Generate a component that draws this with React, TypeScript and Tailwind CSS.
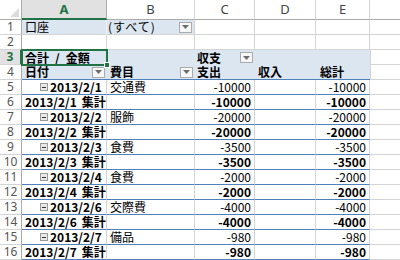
import React from "react";

const FONT = { fontFamily: "'Noto Sans CJK JP', 'Noto Sans', sans-serif" };

const W = ["w-[22px]", "w-[85px]", "w-[88px]", "w-[60px]", "w-[61px]", "w-[54px]"];

function Drop() {
  return (
    <div className="w-[13px] h-[11px] border border-[#ababab] bg-[#f7f7f7] flex items-center justify-center shrink-0">
      <svg width="7" height="4" viewBox="0 0 7 4">
        <path d="M0 0 H7 L3.5 4 Z" fill="#6d6d6d" />
      </svg>
    </div>
  );
}

function Minus() {
  return (
    <div className="w-[8px] h-[8px] border border-[#9a9a9a] bg-[#e8e8e8] flex items-center justify-center shrink-0 mr-[2px]">
      <div className="w-[4px] h-px bg-[#333]" />
    </div>
  );
}

function RowNum({ n, active }: { n: number; active?: boolean }) {
  return (
    <div
      className={
        "w-[22px] shrink-0 h-full flex items-center justify-center text-[12px] leading-none border-b border-[#d4d4d4] " +
        (active
          ? "bg-[#e1e1e1] text-[#217346] font-bold border-r-2 border-r-[#217346]"
          : "bg-white text-[#555] border-r border-r-[#ababab]")
      }
      style={{ fontFamily: "'Noto Sans', sans-serif" }}
    >
      {n}
    </div>
  );
}

const data = [
  { d: "2013/2/1", c: "交通費", v: "-10000" },
  { d: "2013/2/2", c: "服飾", v: "-20000" },
  { d: "2013/2/3", c: "食費", v: "-3500" },
  { d: "2013/2/4", c: "食費", v: "-2000" },
  { d: "2013/2/6", c: "交際費", v: "-4000" },
  { d: "2013/2/7", c: "備品", v: "-980" },
];

function Filler() {
  return <div className="flex-1 h-full border-b border-[#d4d4d4]" />;
}

export default function App() {
  const rows: React.ReactNode[] = [];
  let n = 5;
  data.forEach((it) => {
    rows.push(
      <div key={"r" + n} className="flex h-[15px]">
        <RowNum n={n} />
        <div className="w-[85px] shrink-0 h-full border-b border-[#4f81bd] border-r border-r-[#d4d4d4] flex items-center pl-[18px] font-bold text-[12px] leading-none text-black">
          <Minus />
          <span>{it.d}</span>
        </div>
        <div className="w-[88px] shrink-0 h-full border-b border-[#4f81bd] border-r border-r-[#d4d4d4] flex items-center pl-[3px] text-[12px] leading-none text-black">
          {it.c}
        </div>
        <div className="w-[60px] shrink-0 h-full border-b border-[#4f81bd] border-r border-r-[#d4d4d4] flex items-center justify-end pr-[3px] text-[12px] leading-none text-black">
          {it.v}
        </div>
        <div className="w-[61px] shrink-0 h-full border-b border-[#4f81bd] border-r border-r-[#d4d4d4]" />
        <div className="w-[54px] shrink-0 h-full border-b border-[#4f81bd] border-r border-r-[#d4d4d4] flex items-center justify-end pr-[3px] text-[12px] leading-none text-black">
          {it.v}
        </div>
        <Filler />
      </div>
    );
    n++;
    rows.push(
      <div key={"r" + n} className="flex h-[15px]">
        <RowNum n={n} />
        <div className="w-[85px] shrink-0 h-full border-b border-[#4f81bd] border-r border-r-[#d4d4d4] flex items-center pl-[3px] font-bold text-[12px] leading-none text-black whitespace-nowrap">
          <span>{it.d}</span>
          <span className="ml-[5px]">集計</span>
        </div>
        <div className="w-[88px] shrink-0 h-full border-b border-[#4f81bd] border-r border-r-[#d4d4d4]" />
        <div className="w-[60px] shrink-0 h-full border-b border-[#4f81bd] border-r border-r-[#d4d4d4] flex items-center justify-end pr-[3px] font-bold text-[12px] leading-none text-black">
          {it.v}
        </div>
        <div className="w-[61px] shrink-0 h-full border-b border-[#4f81bd] border-r border-r-[#d4d4d4]" />
        <div className="w-[54px] shrink-0 h-full border-b border-[#4f81bd] border-r border-r-[#d4d4d4] flex items-center justify-end pr-[3px] font-bold text-[12px] leading-none text-black">
          {it.v}
        </div>
        <Filler />
      </div>
    );
    n++;
  });

  return (
    <div className="w-[400px] h-[260px] overflow-hidden bg-white" style={FONT}>
      {/* column headers */}
      <div className="flex h-[20px]" style={{ fontFamily: "'Noto Sans', sans-serif" }}>
        <div className="w-[22px] shrink-0 h-full border-r border-b border-[#ababab] bg-white relative">
          <svg className="absolute right-[2px] bottom-[2px]" width="9" height="9" viewBox="0 0 9 9">
            <path d="M9 0 V9 H0 Z" fill="#dcdcdc" />
          </svg>
        </div>
        <div className="w-[85px] shrink-0 h-full bg-[#e1e1e1] border-r border-r-[#ababab] border-b-2 border-b-[#217346] flex items-center justify-center text-[13px] font-bold text-[#217346] leading-none">
          A
        </div>
        {["B", "C", "D", "E"].map((l, i) => (
          <div
            key={l}
            className={W[i + 2] + " shrink-0 h-full bg-white border-r border-r-[#d4d4d4] border-b border-b-[#ababab] flex items-center justify-center text-[13px] text-[#444] leading-none"}
          >
            {l}
          </div>
        ))}
        <div className="flex-1 h-full border-b border-[#ababab]" />
      </div>

      {/* row 1 */}
      <div className="flex h-[15px]">
        <RowNum n={1} />
        <div className="w-[85px] shrink-0 h-full bg-[#dce6f1] border-b border-[#d4d4d4] border-r border-r-[#eef2f8] flex items-center pl-[3px] text-[12px] leading-none text-black">
          口座
        </div>
        <div className="w-[88px] shrink-0 h-full bg-[#dce6f1] border-b border-[#d4d4d4] border-r border-r-[#d4d4d4] flex items-center justify-between pl-[1px] pr-[2px] text-[12px] leading-none text-black">
          <span className="tracking-[1px]">(すべて)</span>
          <Drop />
        </div>
        <div className="w-[60px] shrink-0 h-full border-b border-r border-[#d4d4d4]" />
        <div className="w-[61px] shrink-0 h-full border-b border-r border-[#d4d4d4]" />
        <div className="w-[54px] shrink-0 h-full border-b border-r border-[#d4d4d4]" />
        <Filler />
      </div>

      {/* row 2 */}
      <div className="flex h-[15px]">
        <RowNum n={2} />
        <div className="w-[85px] shrink-0 h-full border-b border-r border-[#d4d4d4]" />
        <div className="w-[88px] shrink-0 h-full border-b border-r border-[#d4d4d4]" />
        <div className="w-[60px] shrink-0 h-full border-b border-r border-[#d4d4d4]" />
        <div className="w-[61px] shrink-0 h-full border-b border-r border-[#d4d4d4]" />
        <div className="w-[54px] shrink-0 h-full border-b border-r border-[#d4d4d4]" />
        <Filler />
      </div>

      {/* row 3 */}
      <div className="flex h-[15px]">
        <RowNum n={3} active />
        <div className="w-[85px] shrink-0 h-full bg-[#dce6f1] flex items-center pl-[3px] font-bold text-[12px] leading-none text-black relative whitespace-nowrap">
          <span>合計</span>
          <span className="mx-[6px]">/</span>
          <span>金額</span>
          <div className="absolute left-[-1px] top-[-1px] right-[-1px] bottom-[-1px] border-2 border-[#217346]" />
          <div className="absolute right-[-3px] bottom-[-3px] w-[6px] h-[6px] bg-[#217346] border border-white" />
        </div>
        <div className="w-[88px] shrink-0 h-full bg-[#dce6f1]" />
        <div className="w-[60px] shrink-0 h-full bg-[#dce6f1] flex items-center justify-between pl-[2px] pr-[2px] font-bold text-[12px] leading-none text-black">
          <span>収支</span>
          <Drop />
        </div>
        <div className="w-[61px] shrink-0 h-full bg-[#dce6f1]" />
        <div className="w-[54px] shrink-0 h-full bg-[#dce6f1]" />
        <div className="flex-1 h-full border-b border-[#d4d4d4] border-l border-l-[#d4d4d4]" />
      </div>

      {/* row 4 */}
      <div className="flex h-[15px]">
        <RowNum n={4} />
        <div className="w-[85px] shrink-0 h-full bg-[#dce6f1] border-b border-[#4f81bd] flex items-center justify-between pl-[3px] pr-[2px] font-bold text-[12px] leading-none text-black">
          <span>日付</span>
          <Drop />
        </div>
        <div className="w-[88px] shrink-0 h-full bg-[#dce6f1] border-b border-[#4f81bd] flex items-center justify-between pl-[3px] pr-[2px] font-bold text-[12px] leading-none text-black">
          <span>費目</span>
          <Drop />
        </div>
        <div className="w-[60px] shrink-0 h-full bg-[#dce6f1] border-b border-[#4f81bd] flex items-center pl-[2px] font-bold text-[12px] leading-none text-black">
          支出
        </div>
        <div className="w-[61px] shrink-0 h-full bg-[#dce6f1] border-b border-[#4f81bd] flex items-center pl-[3px] font-bold text-[12px] leading-none text-black">
          収入
        </div>
        <div className="w-[54px] shrink-0 h-full bg-[#dce6f1] border-b border-[#4f81bd] flex items-center pl-[4px] font-bold text-[12px] leading-none text-black">
          総計
        </div>
        <div className="flex-1 h-full border-b border-[#d4d4d4] border-l border-l-[#d4d4d4]" />
      </div>

      {rows}
    </div>
  );
}
